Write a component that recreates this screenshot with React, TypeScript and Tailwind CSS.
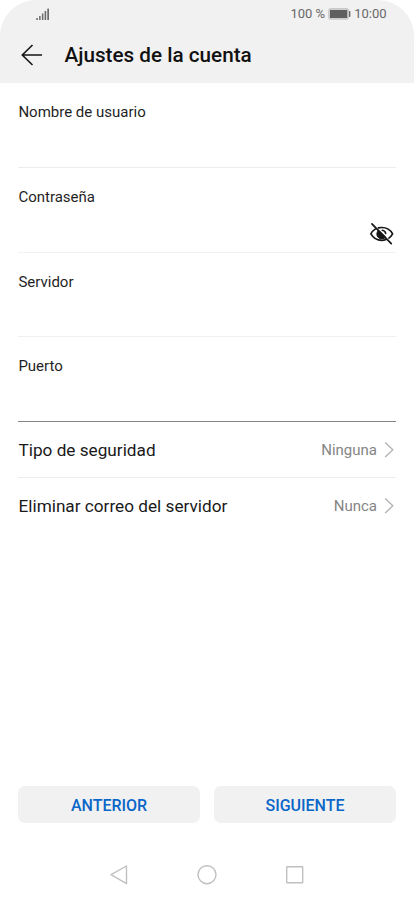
import React from 'react';

function SignalIcon() {
  return (
    <svg className="h-[13px] w-[14px]" viewBox="0 0 14 13" fill="#6b6b6b">
      <rect x="0.3" y="10" width="1.5" height="2" />
      <rect x="3.1" y="8" width="1.5" height="4" />
      <rect x="5.9" y="5.5" width="1.5" height="6.5" />
      <rect x="8.6" y="3" width="1.6" height="9" />
      <rect x="11.3" y="0.6" width="1.7" height="11.4" />
    </svg>
  );
}

function BatteryIcon() {
  return (
    <svg className="h-3 w-[23px]" viewBox="0 0 23 12">
      <rect x="0.8" y="0.7" width="19.6" height="10.4" rx="1.4" fill="#d2d2d2" stroke="#c2c2c2" strokeWidth="1" />
      <rect x="2" y="2" width="17.2" height="8" fill="#5f5f5f" />
      <path d="M21 3h.6a.8.8 0 0 1 .8.8v4.4a.8.8 0 0 1-.8.8H21z" fill="#6a6a6a" />
    </svg>
  );
}

function EyeOffIcon() {
  return (
    <svg className="h-6 w-6" viewBox="0 0 24 24" fill="none" stroke="#161616" strokeWidth="1.7" strokeLinecap="round">
      <path d="M5.5 6.9C3.4 8.2 1.8 10 .9 11.9c2 3.6 5.8 6.4 10.8 6.4 1.6 0 3-.3 4.3-.8" />
      <path d="M8.5 5.9C9.6 5.6 10.6 5.5 11.7 5.5c5 0 9 2.8 10.9 6.4-.9 1.6-2.1 3.1-3.7 4.2" />
      <path d="M8.2 8.5a4.6 4.6 0 0 0 7.2 6.9z" fill="#161616" strokeWidth="1" />
      <path d="M12.2 8.3c1.8.2 3.2 1.5 3.5 3.3" strokeWidth="1.5" />
      <path d="M1.9 1.9 21.3 21.6" />
    </svg>
  );
}

function Field({ label, className = '', children }: { label: string; className?: string; children?: React.ReactNode }) {
  return (
    <div className={`flex flex-col justify-between border-b pt-[19px] ${className}`}>
      <label className="pl-[0.4px] text-[15px] leading-5 text-[#1f1f1f]">{label}</label>
      {children && <div className="flex justify-end pr-[2px] pb-[6px]">{children}</div>}
    </div>
  );
}

function SettingRow({ label, value, className = '' }: { label: string; value: string; className?: string }) {
  return (
    <button className={`flex h-14 w-full items-center text-left ${className}`}>
      <span className="flex-1 pl-[0.5px] text-[17.2px] leading-6 text-[#1a1a1a]">{label}</span>
      <span className="text-[15px] text-[#858585]">{value}</span>
      <svg className="mr-[2.5px] ml-[6.5px] h-4 w-[10px]" viewBox="0 0 10 16" fill="none" stroke="#b5b5b5" strokeWidth="1.4">
        <path d="M1.2 0.6 8.8 7.8 1.2 15" />
      </svg>
    </button>
  );
}

export default function App() {
  return (
    <div className="flex h-[897px] w-[414px] flex-col overflow-hidden bg-white font-[Roboto,sans-serif]">
      <header className="h-[83px] rounded-t-[36px] bg-[#f1f1f1]">
        <div className="flex h-7 items-center justify-between pr-[27.5px] pl-9 text-[#686868]">
          <SignalIcon />
          <div className="flex items-center text-[13px]">
            <span>100 %</span>
            <span className="mr-[3.5px] ml-[2.5px]"><BatteryIcon /></span>
            <span>10:00</span>
          </div>
        </div>
        <div className="flex h-[54px] items-center pl-[21px]">
          <svg className="h-[22px] w-[22px]" viewBox="0 0 22 22" fill="none" stroke="#151515" strokeWidth="1.6">
            <path d="M11.5 1 1.3 11 11.5 21M1.3 11H21" />
          </svg>
          <h1 className="ml-[21.5px] text-[20.7px] leading-8 font-medium text-[#111]">Ajustes de la cuenta</h1>
        </div>
      </header>
      <main className="flex flex-1 flex-col px-[18px]">
        <Field label="Nombre de usuario" className="h-[85px] border-[#ececec]" />
        <Field label="Contraseña" className="h-[85px] border-[#f2f2f2]">
          <EyeOffIcon />
        </Field>
        <Field label="Servidor" className="h-[84px] border-[#efefef]" />
        <Field label="Puerto" className="h-[85px] border-[#858585]" />
        <SettingRow label="Tipo de seguridad" value="Ninguna" className="border-b border-[#ececec] pt-px" />
        <SettingRow label="Eliminar correo del servidor" value="Nunca" />
        <div className="mt-auto flex gap-[14px]">
          <button className="h-[37px] flex-1 rounded-[7px] bg-[#f1f1f1] pt-0.5 text-base font-medium text-[#0a66c8]">ANTERIOR</button>
          <button className="h-[37px] flex-1 rounded-[7px] bg-[#f1f1f1] pt-0.5 text-base font-medium text-[#0a66c8]">SIGUIENTE</button>
        </div>
      </main>
      <nav className="flex h-[74px] items-center justify-center gap-[68px] pt-[30px]">
        <svg className="h-5 w-5" viewBox="0 0 20 20" fill="none" stroke="#c0c0c0" strokeWidth="1.4" strokeLinejoin="round">
          <path d="M17.5 1 2 9.7l15.5 9z" />
        </svg>
        <svg className="h-5 w-5" viewBox="0 0 20 20" fill="none" stroke="#c0c0c0" strokeWidth="1.4">
          <circle cx="10" cy="9.7" r="9" />
        </svg>
        <svg className="h-5 w-5" viewBox="0 0 20 20" fill="none" stroke="#c0c0c0" strokeWidth="1.4">
          <rect x="1.7" y="1.7" width="16" height="16" rx="0.5" />
        </svg>
      </nav>
    </div>
  );
}
